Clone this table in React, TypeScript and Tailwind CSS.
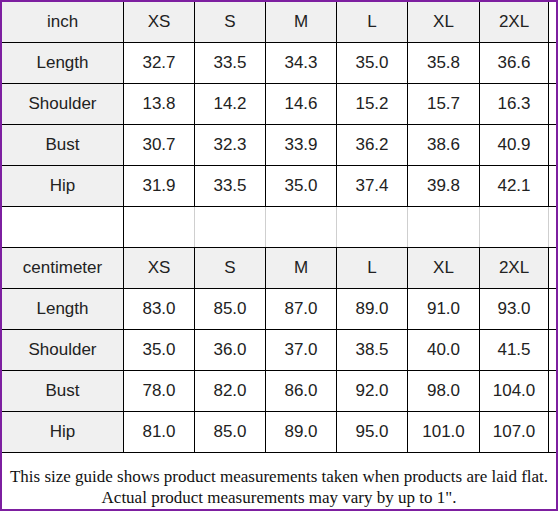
const widths = ["w-[122px]", "w-[71px]", "w-[71px]", "w-[71px]", "w-[71px]", "w-[72px]", "w-[69px]"];

const sizes = ["XS", "S", "M", "L", "XL", "2XL"];

const inchRows: [string, string[]][] = [
  ["Length", ["32.7", "33.5", "34.3", "35.0", "35.8", "36.6"]],
  ["Shoulder", ["13.8", "14.2", "14.6", "15.2", "15.7", "16.3"]],
  ["Bust", ["30.7", "32.3", "33.9", "36.2", "38.6", "40.9"]],
  ["Hip", ["31.9", "33.5", "35.0", "37.4", "39.8", "42.1"]],
];

const cmRows: [string, string[]][] = [
  ["Length", ["83.0", "85.0", "87.0", "89.0", "91.0", "93.0"]],
  ["Shoulder", ["35.0", "36.0", "37.0", "38.5", "40.0", "41.5"]],
  ["Bust", ["78.0", "82.0", "86.0", "92.0", "98.0", "104.0"]],
  ["Hip", ["81.0", "85.0", "89.0", "95.0", "101.0", "107.0"]],
];

function Row({ cells, header }: { cells: string[]; header?: boolean }) {
  return (
    <div className="flex h-[41px] border-b border-black">
      {cells.map((c, i) => (
        <div
          key={i}
          className={`${widths[i]} flex items-center justify-center border-r border-black ${
            header || i === 0 ? "bg-[#f0f0f0]" : "bg-white"
          }`}
        >
          {c}
        </div>
      ))}
    </div>
  );
}

function EmptyRow() {
  return (
    <div className="flex h-[41px] border-b border-black">
      {widths.map((w, i) => (
        <div
          key={i}
          className={`${w} bg-white border-r ${i === 0 ? "border-black" : "border-[#cfcfcf]"}`}
        />
      ))}
    </div>
  );
}

export default function App() {
  return (
    <div className="w-[558px] h-[511px] bg-white border-2 border-[#7d1fa0] flex flex-col text-[17px] text-[#222] font-['Liberation_Sans',Arial,sans-serif]">
      <Row header cells={["inch", ...sizes]} />
      {inchRows.map(([label, vals]) => (
        <Row key={label} cells={[label, ...vals]} />
      ))}
      <EmptyRow />
      <Row header cells={["centimeter", ...sizes]} />
      {cmRows.map(([label, vals]) => (
        <Row key={label + "cm"} cells={[label, ...vals]} />
      ))}
      <div className="flex-1 flex flex-col items-center pt-[13px] font-['Liberation_Serif','Times_New_Roman',serif] text-[17px] leading-[21px] text-[#111]">
        <p>This size guide shows product measurements taken when products are laid flat.</p>
        <p>Actual product measurements may vary by up to 1".</p>
      </div>
    </div>
  );
}
